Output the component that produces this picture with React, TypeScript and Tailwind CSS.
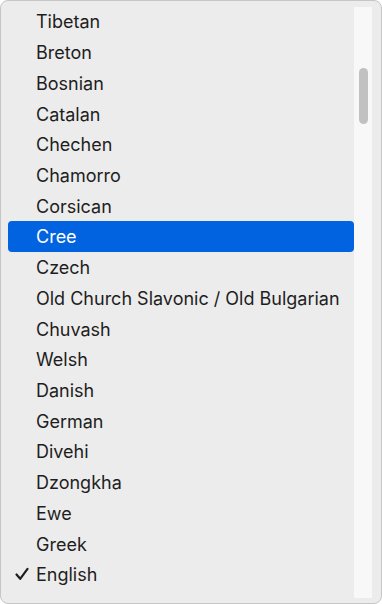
import React from 'react';

const languages = [
  'Tibetan',
  'Breton',
  'Bosnian',
  'Catalan',
  'Chechen',
  'Chamorro',
  'Corsican',
  'Cree',
  'Czech',
  'Old Church Slavonic / Old Bulgarian',
  'Chuvash',
  'Welsh',
  'Danish',
  'German',
  'Divehi',
  'Dzongkha',
  'Ewe',
  'Greek',
  'English',
];

const highlighted = 'Cree';
const checked = 'English';

const CheckIcon = () => (
  <svg width="14" height="14" viewBox="0 0 14 14" className="absolute left-[7px] top-1/2 -translate-y-1/2">
    <path d="M1.5 7.5 L5.2 11.8 L12.5 1.8" fill="none" stroke="#1f1f1f" strokeWidth="2.2" strokeLinecap="round" strokeLinejoin="round" />
  </svg>
);

export default function App() {
  return (
    <div className="w-[382px] h-[604px] bg-white">
      <div className="w-full h-full bg-[#ececec] border border-[#c6c6c6] rounded-[8px] flex overflow-hidden" style={{ fontFamily: 'Inter, "Noto Sans", sans-serif' }}>
        <ul className="flex-1 pl-[7px] pt-[5px]">
          {languages.map((lang) => {
            const active = lang === highlighted;
            return (
              <li
                key={lang}
                className={`relative h-[30.72px] flex items-center pl-[28px] pt-[1px] rounded-[4px] text-[18px] ${
                  active ? 'bg-[#0163e0] text-white' : 'text-[#1e1e1e]'
                }`}
              >
                {lang === checked && <CheckIcon />}
                {lang}
              </li>
            );
          })}
        </ul>
        <div className="w-[18px] mt-[6px] mb-[5px] bg-[#f8f8f8] flex justify-center">
          <div className="w-[9px] h-[56px] mt-[61px] rounded-full bg-[#c1c1c1]" />
        </div>
        <div className="w-[9px]" />
      </div>
    </div>
  );
}
